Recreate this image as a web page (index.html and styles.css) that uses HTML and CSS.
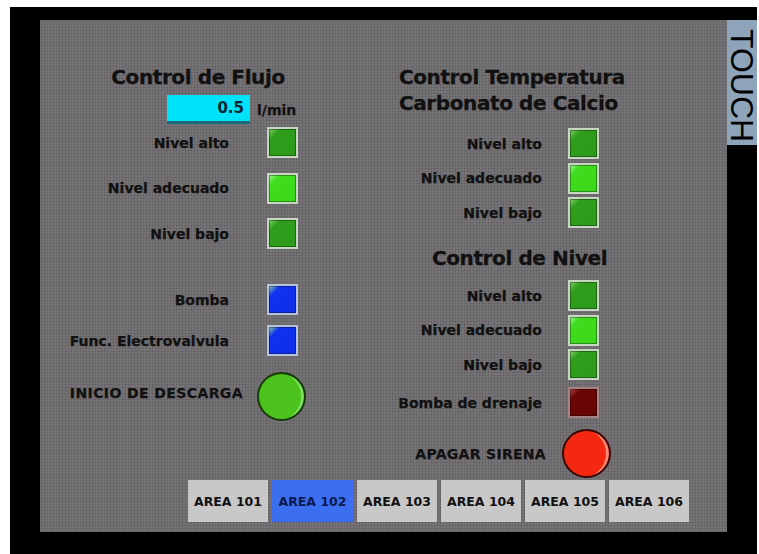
FILE: index.html
```html
<!DOCTYPE html>
<html lang="es">
<head>
    <meta charset="UTF-8">
    <meta name="viewport" content="width=device-width, initial-scale=1.0">
    <title>HMI Area 102</title>
    <link rel="stylesheet" href="styles.css">
</head>
<body>
    <div class="bezel">
        <div class="screen">
            <div class="columns">
                <!-- Control de flujo -->
                <div class="col col-left">
                    <h2 class="title title-flujo">Control de Flujo</h2>
                    <div class="flow-row">
                        <div class="flow-value">0.5</div>
                        <span class="flow-unit">l/min</span>
                    </div>
                    <div class="group group-levels">
                        <div class="row"><span class="label">Nivel alto</span><span class="lamp lamp-green"></span></div>
                        <div class="row"><span class="label">Nivel adecuado</span><span class="lamp lamp-lime"></span></div>
                        <div class="row"><span class="label">Nivel bajo</span><span class="lamp lamp-green"></span></div>
                    </div>
                    <div class="group group-pumps">
                        <div class="row"><span class="label">Bomba</span><span class="lamp lamp-blue"></span></div>
                        <div class="row"><span class="label">Func. Electrovalvula</span><span class="lamp lamp-blue"></span></div>
                    </div>
                    <div class="btn-row btn-row-left">
                        <span class="label label-btn">INICIO DE DESCARGA</span>
                        <button class="round-btn round-green"></button>
                    </div>
                </div>

                <!-- Temperatura y nivel -->
                <div class="col col-right">
                    <h2 class="title title-temp">Control Temperatura<br>Carbonato de Calcio</h2>
                    <div class="group group-tight group-temp">
                        <div class="row"><span class="label">Nivel alto</span><span class="lamp lamp-green"></span></div>
                        <div class="row"><span class="label">Nivel adecuado</span><span class="lamp lamp-lime"></span></div>
                        <div class="row"><span class="label">Nivel bajo</span><span class="lamp lamp-green"></span></div>
                    </div>
                    <h2 class="title title-nivel">Control de Nivel</h2>
                    <div class="group group-tight group-nivel">
                        <div class="row"><span class="label">Nivel alto</span><span class="lamp lamp-green"></span></div>
                        <div class="row"><span class="label">Nivel adecuado</span><span class="lamp lamp-lime"></span></div>
                        <div class="row"><span class="label">Nivel bajo</span><span class="lamp lamp-green"></span></div>
                    </div>
                    <div class="row row-drain"><span class="label">Bomba de drenaje</span><span class="lamp lamp-red"></span></div>
                    <div class="btn-row btn-row-right">
                        <span class="label label-caps">APAGAR SIRENA</span>
                        <button class="round-btn round-red"></button>
                    </div>
                </div>
            </div>

            <div class="tabs">
                <button class="tab">AREA 101</button>
                <button class="tab tab-active">AREA 102</button>
                <button class="tab">AREA 103</button>
                <button class="tab">AREA 104</button>
                <button class="tab">AREA 105</button>
                <button class="tab">AREA 106</button>
            </div>
        </div>
        <div class="side">
            <div class="touch">TOUCH</div>
        </div>
    </div>
</body>
</html>
```

FILE: styles.css
```css
body {
    margin: 0;
    background-color: #fff;
    font-family: "DejaVu Sans", Verdana, sans-serif;
    color: #111;
}
.bezel {
    display: flex;
    margin: 7px 0 0 10px;
    width: 747px;
    height: 547px;
    padding: 13px 0 0 30px;
    box-sizing: border-box;
    background-color: #000;
}
.screen {
    display: flex;
    flex-direction: column;
    width: 687px;
    height: 512px;
    padding: 44px 0 10px 0;
    box-sizing: border-box;
    background-color: #747274;
    background-image: radial-gradient(circle, #5d5b5d 0.7px, transparent 1.1px);
    background-size: 3px 3px;
}
.side {
    width: 30px;
}
.touch {
    height: 125px;
    background-color: #8ea4ba;
    writing-mode: vertical-rl;
    font-family: "Liberation Sans", Arial, sans-serif;
    font-size: 32px;
    line-height: 30px;
    text-align: center;
    color: #000;
    padding-top: 7px;
    box-sizing: border-box;
}
.columns {
    display: flex;
}
.col {
    display: flex;
    flex-direction: column;
}
.col-left {
    width: 316px;
}
.col-right {
    width: 371px;
}
.title {
    margin: 0;
    font-size: 20px;
    letter-spacing: -0.4px;
    line-height: 26px;
    font-weight: bold;
    color: #111;
    -webkit-text-stroke: 0.3px #111;
}
.title-flujo {
    text-align: center;
}
.title-temp {
    margin-left: 43px;
}
.title-nivel {
    margin: 17px 0 0 76px;
}
.label {
    font-size: 14px;
    font-weight: bold;
    text-align: right;
    white-space: nowrap;
    -webkit-text-stroke: 0.25px #111;
}
.label-caps {
    letter-spacing: 0.3px;
}
.flow-row {
    display: flex;
    align-items: center;
    margin: 5px 0 0 127px;
}
.flow-value {
    width: 83px;
    height: 29px;
    line-height: 26px;
    padding-right: 6px;
    box-sizing: border-box;
    text-align: right;
    font-size: 15px;
    font-weight: bold;
    color: #0c2430;
    background-color: #00e2f8;
    border-bottom: 3px solid #1b6b78;
}
.flow-unit {
    margin-left: 7px;
    font-size: 14px;
    font-weight: bold;
    -webkit-text-stroke: 0.25px #111;
}
.group {
    display: flex;
    flex-direction: column;
}
.group-levels {
    margin-top: 3px;
    gap: 14.5px;
}
.group-pumps {
    margin-top: 35px;
    gap: 10px;
}
.group-tight {
    gap: 3.5px;
}
.group-temp {
    margin-top: 12px;
}
.group-nivel {
    margin-top: 9px;
}
.row {
    display: grid;
    align-items: center;
}
.col-left .row {
    grid-template-columns: 189px 31px;
    column-gap: 38px;
}
.col-right .row {
    grid-template-columns: 186px 31px;
    column-gap: 26px;
}
.row-drain {
    margin-top: 7px;
}
.lamp {
    width: 31px;
    height: 31px;
    box-sizing: border-box;
    border: 2px solid #c6d6c2;
    box-shadow: inset 0 0 0 1px rgba(0, 0, 0, 0.35);
}
.lamp-green {
    background: linear-gradient(135deg, #7fd36a 0, #2f9e1c 22%, #2c9a1a 100%);
}
.lamp-lime {
    background: linear-gradient(135deg, #9cf58a 0, #40dd1e 22%, #3bd81a 100%);
}
.lamp-blue {
    border-color: #b6c2dc;
    background: linear-gradient(135deg, #8fd0a0 0, #1132ee 22%, #0e2ee8 100%);
}
.lamp-red {
    border-color: #a88282;
    background: linear-gradient(135deg, #b04848 0, #6c0606 22%, #660404 100%);
}
.btn-row {
    display: grid;
    align-items: center;
}
.btn-row-left {
    margin-top: 16px;
    grid-template-columns: 203px 49px;
    column-gap: 14px;
}
.label-btn {
    padding-bottom: 8px;
    letter-spacing: 0.4px;
}
.btn-row-right {
    margin-top: 11px;
    grid-template-columns: 190px 49px;
    column-gap: 16px;
}
.round-btn {
    width: 49px;
    height: 49px;
    padding: 0;
    border-radius: 50%;
    cursor: pointer;
}
.round-green {
    border: 2px solid #173a0c;
    background-color: #4cc21c;
    box-shadow: inset -5px 0 0 -2px #7fe060;
}
.round-red {
    border: 2px solid #3a0805;
    background-color: #f42810;
    box-shadow: inset -5px 0 0 -2px #ff8a78;
}
.tabs {
    display: flex;
    gap: 4px;
    margin: auto 0 0 148px;
}
.tab {
    width: 80px;
    height: 42px;
    padding: 0;
    border: none;
    background-color: #c8c8c8;
    font-family: "DejaVu Sans", Verdana, sans-serif;
    font-size: 12.5px;
    font-weight: bold;
    color: #111;
    cursor: pointer;
}
.tab-active {
    width: 81px;
    background-color: #3c6ef0;
    color: #0a1a50;
}
```
